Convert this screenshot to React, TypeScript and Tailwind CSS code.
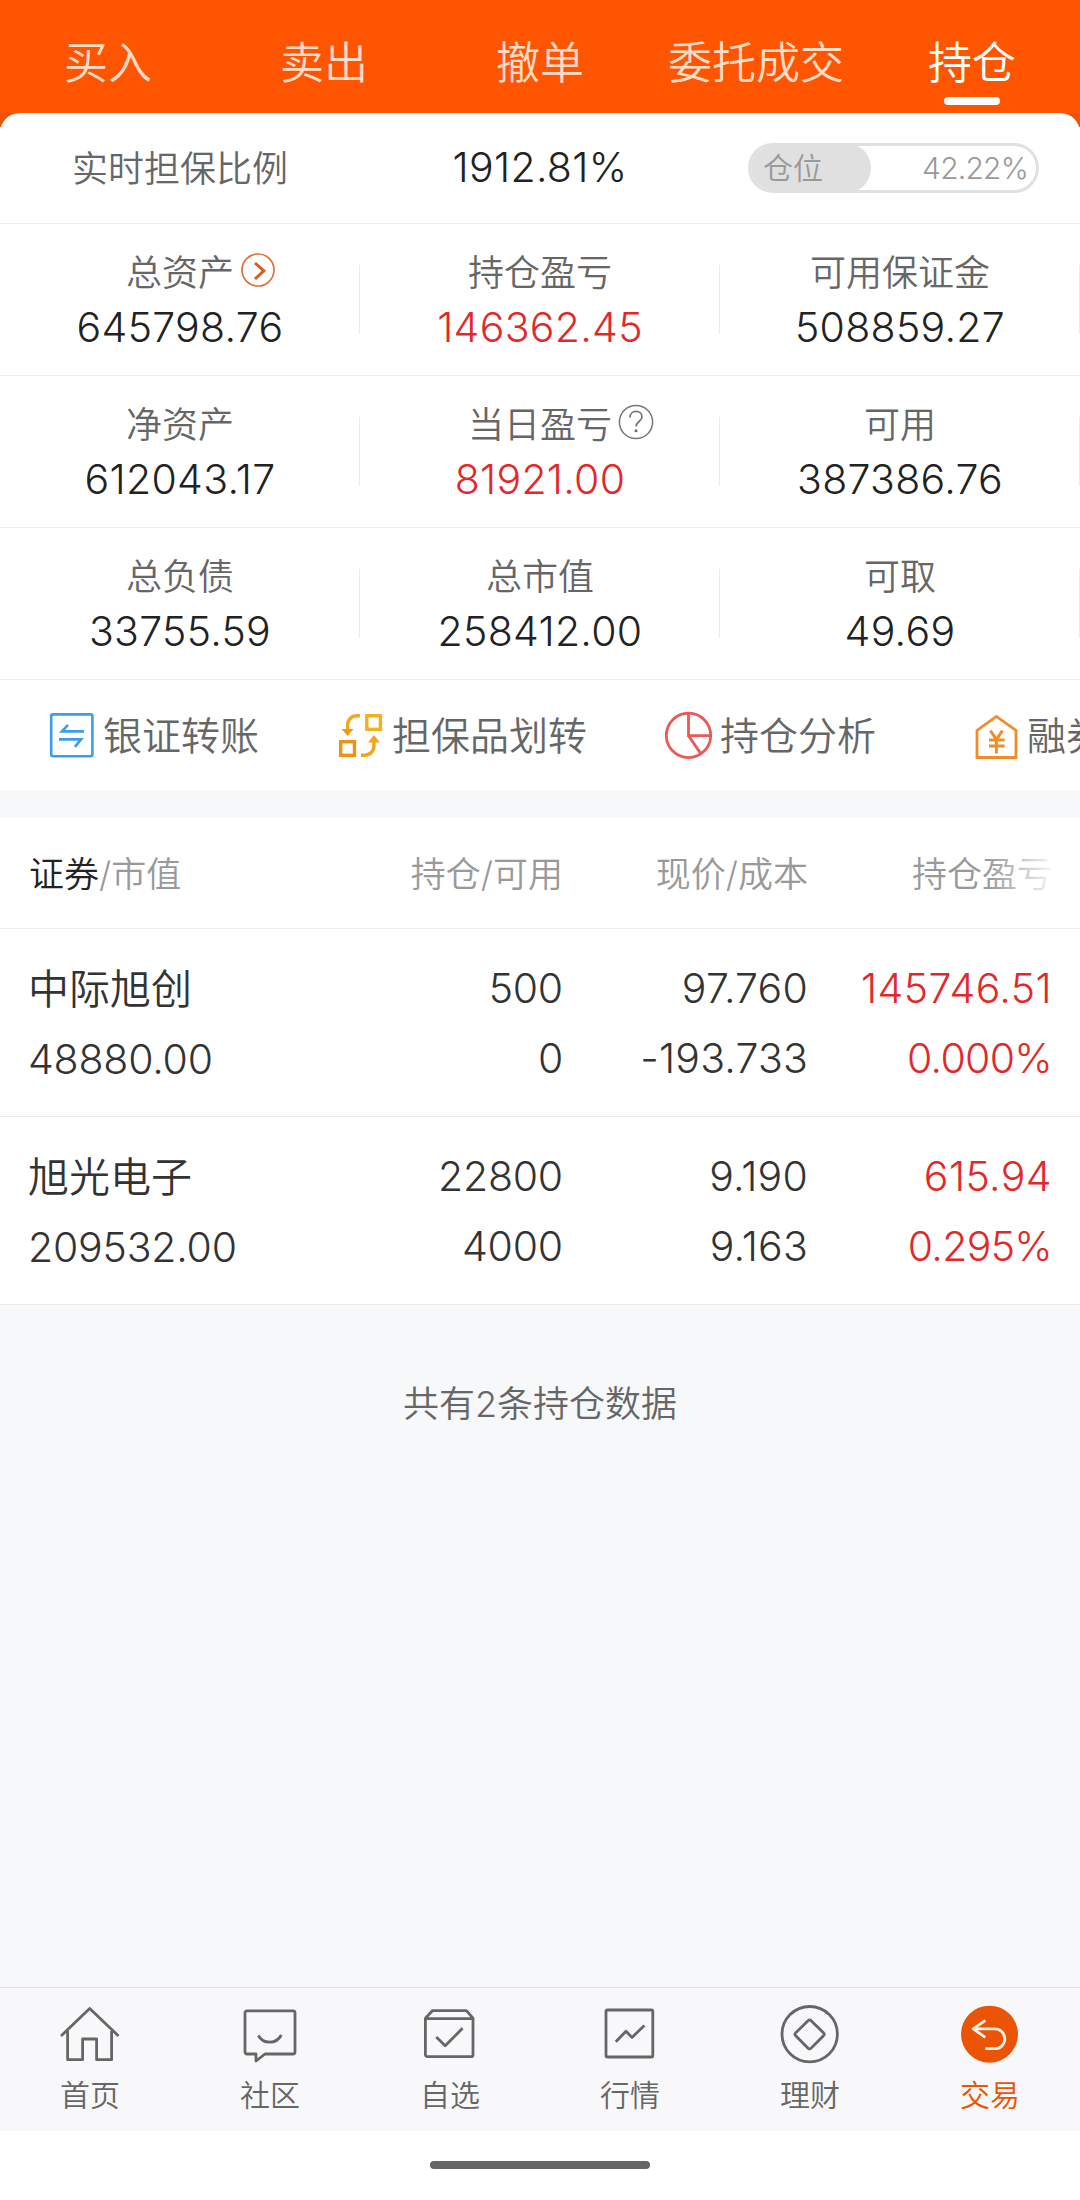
import clsx from "clsx";
import type { ReactNode } from "react";

const tabs = ["买入", "卖出", "撤单", "委托成交", "持仓"];

type Stat = { label: string; value: string; red?: boolean; icon?: ReactNode };

function ArrowCircle() {
  return (
    <svg viewBox="0 0 36 36" className="size-9" fill="none">
      <circle cx="18" cy="18" r="16" stroke="#e0703a" strokeWidth="1.7" />
      <path d="M15 11l8.8 7.8L15 27" stroke="#dc5a1c" strokeWidth="3" />
    </svg>
  );
}

function HelpCircle() {
  return (
    <svg viewBox="0 0 36 36" className="size-9" fill="none" stroke="#777">
      <circle cx="18" cy="18" r="16.6" strokeWidth="1.5" />
      <path
        d="M12 13.400c0-3.600 2.600-6 6-6s6 2.300 6 5.400c0 4.600-6 4.800-6 9.800"
        strokeWidth="1.800"
      />
      <circle cx="18" cy="26.800" r="1.500" fill="#666" stroke="none" />
    </svg>
  );
}

const stats: Stat[][] = [
  [
    { label: "总资产", value: "645798.76", icon: <ArrowCircle /> },
    { label: "持仓盈亏", value: "146362.45", red: true },
    { label: "可用保证金", value: "508859.27" },
  ],
  [
    { label: "净资产", value: "612043.17" },
    { label: "当日盈亏", value: "81921.00", red: true, icon: <HelpCircle /> },
    { label: "可用", value: "387386.76" },
  ],
  [
    { label: "总负债", value: "33755.59" },
    { label: "总市值", value: "258412.00" },
    { label: "可取", value: "49.69" },
  ],
];

const holdings = [
  {
    name: "中际旭创",
    marketValue: "48880.00",
    amount: "500",
    available: "0",
    price: "97.760",
    cost: "-193.733",
    profit: "145746.51",
    rate: "0.000%",
  },
  {
    name: "旭光电子",
    marketValue: "209532.00",
    amount: "22800",
    available: "4000",
    price: "9.190",
    cost: "9.163",
    profit: "615.94",
    rate: "0.295%",
  },
];

function StatCell({ label, value, red, icon }: Stat) {
  return (
    <div className="relative flex h-[151px] flex-col items-center pt-7">
      <div className="relative text-[36px] leading-[42px] text-[#666]">
        {label}
        {icon && (
          <span className="absolute top-0 left-full ml-1.5">{icon}</span>
        )}
      </div>
      <div
        className={clsx(
          "mt-3 text-[41px] leading-[42px] font-light tracking-[0.3px]",
          red ? "text-[#e22828]" : "text-[#222]",
        )}
      >
        {value}
      </div>
      <div className="absolute top-[41px] right-0 h-[69px] w-px bg-[#ebebeb]" />
    </div>
  );
}

function TransferIcon() {
  return (
    <svg viewBox="0 0 48 48" className="size-12" fill="none" stroke="#3a9fea">
      <rect x="3.200" y="3.400" width="41.200" height="41.800" rx="2" strokeWidth="2.600" />
      <path d="M36 20.400H14l6-6.600M11 28.400h22l-6 7.400" strokeWidth="2.700" />
    </svg>
  );
}

function CollateralIcon() {
  return (
    <svg viewBox="0 0 48 48" className="size-12" fill="none" strokeWidth="3.400">
      <rect x="29.800" y="4.700" width="13.600" height="13.600" stroke="#f3b120" />
      <rect x="3.700" y="30.700" width="13.800" height="13.600" stroke="#ee9214" />
      <path d="M22.900 4.800h-3c-5.500 0-9.300 4-9.300 9.200v5" stroke="#f2a81e" />
      <path d="M4.600 18h12l-6 7z" fill="#ee9a17" />
      <path d="M24 44.200h3.500c5.600 0 9.400-4 9.400-9.200v-5" stroke="#f2a516" />
      <path d="M30.900 31.400h12l-6-7.400z" fill="#f2a516" />
    </svg>
  );
}

function PieIcon() {
  return (
    <svg viewBox="0 0 48 48" className="size-12" fill="none" stroke="#ea5858" strokeWidth="2.800">
      <circle cx="23.500" cy="24.400" r="22.200" />
      <path d="M23.500 2v22.600h22M23.500 24.600l12.300 18" />
    </svg>
  );
}

function HouseYuanIcon() {
  return (
    <svg viewBox="0 0 48 48" className="size-12" fill="none" stroke="#f08c2a" strokeWidth="2.800">
      <path d="M5 46.500V19.400L24.400 5.400 44 19.400v27.100z" />
      <path d="M18.400 19.600l6 9 6-9M17 28.900h15.600M17 35.100h15.600M24.400 28v14.400" strokeWidth="3" />
    </svg>
  );
}

const shortcuts = [
  { label: "银证转账", icon: <TransferIcon /> },
  { label: "担保品划转", icon: <CollateralIcon /> },
  { label: "持仓分析", icon: <PieIcon /> },
  { label: "融券", icon: <HouseYuanIcon /> },
];

const navItems = [
  {
    label: "首页",
    icon: (
      <path d="M1 32L29.700 4.500 58.500 32M7.600 27v28.700h15V35h14v20.700h15V27" />
    ),
  },
  {
    label: "社区",
    icon: (
      <>
        <path d="M7 6.800h46a2 2 0 0 1 2 2V48a2 2 0 0 1-2 2H25l-9 7v-7H7a2 2 0 0 1-2-2V8.800a2 2 0 0 1 2-2z" />
        <path d="M18.300 31.500c5 9 18 9 23-.5" />
      </>
    ),
  },
  {
    label: "自选",
    icon: (
      <>
        <path d="M5.400 14.200l7-7.500h34l6.600 7.500v36.500a2 2 0 0 1-2 2H7.400a2 2 0 0 1-2-2zM5.400 14.700H53" />
        <path d="M16.300 33l8.900 8.700 17.400-17.400" />
      </>
    ),
  },
  {
    label: "行情",
    icon: (
      <>
        <rect x="6" y="6" width="46.800" height="47" rx="1.500" />
        <path d="M15.800 37.700L26 27.200l6 6.200 12.400-12" />
      </>
    ),
  },
  {
    label: "理财",
    icon: (
      <>
        <circle cx="29.700" cy="30.200" r="27.700" />
        <path d="M28.300 16.500L15.500 29a1.500 1.500 0 0 0 0 2.400l12.800 13a1.800 1.800 0 0 0 2.600 0l12.800-13a1.500 1.500 0 0 0 0-2.400L30.900 16.500a1.800 1.800 0 0 0-2.600 0z" />
      </>
    ),
  },
  {
    label: "交易",
    active: true,
    icon: (
      <>
        <circle cx="29.500" cy="30.200" r="28.500" fill="#ea5404" stroke="none" />
        <path
          d="M25.400 16.400l-12.200 8.500 12.200 8.500M13.200 24.900h21.600c5.500 0 10 4.200 10 9.900s-4.500 9.900-10 9.900h-9.400"
          stroke="#fff0e6"
          strokeWidth="2.800"
        />
      </>
    ),
  },
];

export default function App() {
  return (
    <div className="flex h-[2200px] w-[1080px] flex-col overflow-hidden bg-[#f7f8fa] font-['Inter','Noto_Sans_CJK_SC',sans-serif] font-[350]">
      <header className="grid h-[113px] shrink-0 grid-cols-5 bg-[#ff5500]">
        {tabs.map((tab, i) => (
          <div
            key={tab}
            className={clsx(
              "flex flex-col items-center pt-[37px] text-[44px] leading-[52px]",
              i === 4 ? "text-white" : "text-[#ffdcc8]",
            )}
          >
            {tab}
            {i === 4 && <div className="mt-2 h-2 w-14 rounded-full bg-white" />}
          </div>
        ))}
      </header>

      <div className="shrink-0 bg-linear-to-b from-[#ea5404] from-[14px] to-white to-[14px]">
        <section className="grid h-[111px] grid-cols-3 items-center rounded-t-[20px] border-b border-[#ebebeb] bg-white">
          <div className="pt-0.5 text-center text-[36px] text-[#666]">实时担保比例</div>
          <div className="text-center text-[41px] font-light tracking-[0.3px] text-[#222]">
            1912.81%
          </div>
          <div className="relative ml-7 flex h-[50px] w-[291px] items-center justify-between overflow-hidden rounded-full border-[3px] border-[#e0e0e0] pr-2 pl-3 text-[30px] text-[#999]">
            <div className="absolute inset-y-[-3px] left-[-3px] w-[123px] rounded-full bg-[#e0e0e0]" />
            <span className="relative">仓位</span>
            <span className="relative font-light tracking-[-0.8px]">42.22%</span>
          </div>
        </section>
      </div>

      {stats.map((row, i) => (
        <section
          key={i}
          className="grid shrink-0 grid-cols-3 border-b border-[#ebebeb] bg-white"
        >
          {row.map((cell) => (
            <StatCell key={cell.label} {...cell} />
          ))}
        </section>
      ))}

      <section className="flex h-[110px] shrink-0 items-center gap-[78px] overflow-hidden bg-white pl-12 text-[39px] text-[#666]">
        {shortcuts.map(({ label, icon }, i) => (
          <div
            key={label}
            className={clsx(
              "flex shrink-0 items-center gap-[7px] whitespace-nowrap",
              i === 3 && "ml-[18px]",
            )}
          >
            {icon}
            <span className="pt-0.5">{label}</span>
          </div>
        ))}
      </section>

      <section className="mt-7 shrink-0 bg-white">
        <div className="relative grid h-[111px] grid-cols-[289px_245px_245px_244px] items-center border-b border-[#ebebeb] pt-0.5 pl-[29px] text-[35px] text-[#999]">
          <div>
            <span className="text-[#222]">证券</span>/市值
          </div>
          <div className="text-right">持仓/可用</div>
          <div className="text-right">现价/成本</div>
          <div className="text-right">持仓盈亏</div>
          <div className="absolute inset-y-0 right-[20px] w-[72px] bg-linear-to-r from-white/0 to-white" />
        </div>
        {holdings.map((h) => (
          <div
            key={h.name}
            className="grid h-[188px] grid-cols-[290px_245px_245px_244px] border-b border-[#ebebeb] pt-6 pl-7 text-[41px] leading-[70px] font-light text-[#333]"
          >
            <div>
              <div className="pt-px text-[41px] font-[350]">{h.name}</div>
              <div className="tracking-[-0.2px]">{h.marketValue}</div>
            </div>
            <div className="text-right tracking-[-0.2px]">
              <div>{h.amount}</div>
              <div>{h.available}</div>
            </div>
            <div className="text-right tracking-[0.2px]">
              <div>{h.price}</div>
              <div>{h.cost}</div>
            </div>
            <div className="text-right text-[#e22828]">
              <div className="tracking-[0.4px]">{h.profit}</div>
              <div className="tracking-[-0.7px]">{h.rate}</div>
            </div>
          </div>
        ))}
      </section>

      <p className="mt-[72px] text-center text-[36px] text-[#666]">
        共有2条持仓数据
      </p>

      <nav className="mt-auto grid h-[144px] shrink-0 grid-cols-6 border-t border-[#e2e2e4] bg-[#f8f8fa]">
        {navItems.map(({ label, icon, active }) => (
          <div
            key={label}
            className={clsx(
              "flex flex-col items-center pt-4 text-[30px] leading-9",
              active ? "text-[#ea5404]" : "text-[#666]",
            )}
          >
            <svg
              viewBox="0 0 60 60"
              className="size-[60px] shrink-0"
              fill="none"
              stroke="#666"
              strokeWidth="2.800"
              strokeLinejoin="round"
            >
              {icon}
            </svg>
            <span className="mt-[13px]">{label}</span>
          </div>
        ))}
      </nav>
      <div className="flex h-[69px] shrink-0 justify-center bg-white pt-[30px]">
        <div className="h-2 w-[220px] rounded-full bg-[#666]" />
      </div>
    </div>
  );
}
